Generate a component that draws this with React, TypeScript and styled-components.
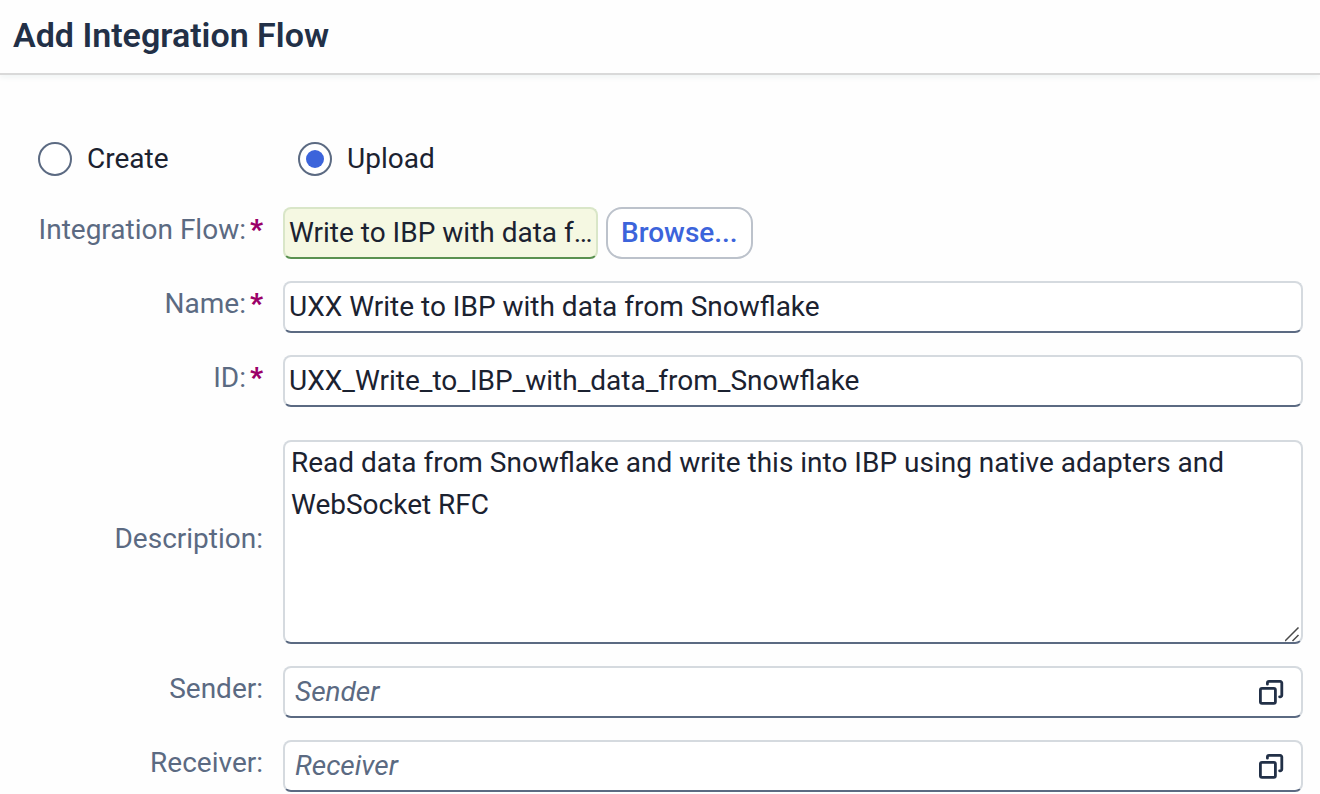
import React from "react";
import styled, { createGlobalStyle, css } from "styled-components";

const color = {
  title: "#223047",
  text: "#1b2230",
  label: "#5b6a82",
  line: "#d5dadf",
  lineStrong: "#5b6a82",
  required: "#9b0068",
  accent: "#3c64db",
  icon: "#223047",
};

const GlobalStyle = createGlobalStyle`
  *, *::before, *::after { box-sizing: border-box; }
  body {
    margin: 0;
    background: #fefefe;
    color: ${color.text};
    font-family: Roboto, sans-serif;
    font-size: 28px;
  }
  input, textarea, button { font: inherit; color: inherit; margin: 0; }
`;

const Dialog = styled.main`
  display: flex;
  flex-direction: column;
`;

const Header = styled.header`
  padding: 15px 13px 18px;
  border-bottom: 2px solid #d9d9d9;
  box-shadow: 0 2px 6px #eef2f2;
`;

const Title = styled.h1`
  margin: 0;
  color: ${color.title};
  font-size: 34px;
  line-height: 40px;
  font-weight: 600;
`;

const Form = styled.form`
  display: flex;
  flex-direction: column;
  gap: 22px;
  padding: 66px 17px 2px 0;
`;

const ModeGroup = styled.div`
  display: grid;
  grid-template-columns: 260px 260px;
  padding: 0 0 8px 38px;
`;

const RadioLabel = styled.label`
  display: flex;
  align-items: center;
  gap: 15px;
  line-height: 36px;
`;

const Radio = styled.input`
  appearance: none;
  display: grid;
  place-items: center;
  width: 34px;
  height: 34px;
  border: 2px solid ${color.lineStrong};
  border-radius: 50%;
  background: #fff;

  &:checked::before {
    content: "";
    width: 18px;
    height: 18px;
    border-radius: 50%;
    background: ${color.accent};
  }
`;

const Row = styled.div<{ $spaced?: boolean }>`
  display: grid;
  grid-template-columns: 263px minmax(0, 1fr);
  column-gap: 20px;
  align-items: center;
  margin-top: ${(p) => (p.$spaced ? "11px" : "0")};
`;

const FieldLabel = styled.label`
  padding-bottom: 6px;
  color: ${color.label};
  line-height: 36px;
  text-align: right;
  white-space: nowrap;
`;

const Required = styled.span`
  margin-left: 4px;
  color: ${color.required};
  font-weight: 900;
`;

const fieldBox = css`
  display: block;
  width: 100%;
  border: 2px solid ${color.line};
  border-bottom-color: ${color.lineStrong};
  border-radius: 8px;
  background: #fff;
  outline: none;
`;

const TextInput = styled.input`
  ${fieldBox}
  height: 52px;
  padding: 0 4px 2px;
`;

const FileName = styled(TextInput)`
  width: 315px;
  padding-right: 0;
  border-color: #d9e6c8;
  border-bottom-color: #5a9150;
  background: #f5f8e2;
  text-overflow: ellipsis;
`;

const FileRow = styled.div`
  display: flex;
  gap: 8px;
`;

const BrowseButton = styled.button`
  height: 52px;
  padding: 0 13px 2px;
  border: 2px solid #bcc2cb;
  border-radius: 16px;
  background: #fff;
  color: ${color.accent};
  font-weight: 500;
`;

const AreaFrame = styled.div`
  position: relative;
`;

const TextArea = styled.textarea`
  ${fieldBox}
  height: 204px;
  padding: 0 6px;
  line-height: 42px;
  resize: none;
`;

const Grip = styled.svg`
  position: absolute;
  right: 3px;
  bottom: 2px;
  pointer-events: none;
`;

const LookupBox = styled.div`
  ${fieldBox}
  display: flex;
  align-items: center;
  height: 52px;
  padding: 0 17px 0 10px;
`;

const LookupInput = styled.input`
  flex: 1;
  min-width: 0;
  padding: 0 0 2px;
  border: 0;
  background: none;
  outline: none;

  &::placeholder {
    color: ${color.label};
    font-style: italic;
    opacity: 1;
  }
`;

const LookupButton = styled.button`
  display: flex;
  padding: 0;
  border: 0;
  background: none;
  color: ${color.icon};
`;

function ValueHelpIcon() {
  return (
    <svg width="26" height="26" viewBox="0 0 26 26" fill="none" stroke="currentColor" strokeWidth="2.8" strokeLinecap="round" aria-hidden="true">
      <rect x="2.4" y="9.4" width="15" height="15" rx="1.6" />
      <path d="M9.4 5.2V4a1.6 1.6 0 0 1 1.6-1.6H22.2A1.6 1.6 0 0 1 23.8 4v12.2a1.6 1.6 0 0 1-1.6 1.6h-.6" />
    </svg>
  );
}

type FieldProps = { id: string; label: string; required?: boolean; spaced?: boolean; children: React.ReactNode };

function Field({ id, label, required, spaced, children }: FieldProps) {
  return (
    <Row $spaced={spaced}>
      <FieldLabel htmlFor={id}>
        {label}:{required && <Required>*</Required>}
      </FieldLabel>
      {children}
    </Row>
  );
}

function Lookup({ id, label }: { id: string; label: string }) {
  return (
    <Field id={id} label={label}>
      <LookupBox>
        <LookupInput id={id} placeholder={label} />
        <LookupButton type="button" aria-label={`Select ${label}`}>
          <ValueHelpIcon />
        </LookupButton>
      </LookupBox>
    </Field>
  );
}

export default function App() {
  return (
    <>
      <GlobalStyle />
      <Dialog>
        <Header>
          <Title>Add Integration Flow</Title>
        </Header>
        <Form>
          <ModeGroup role="radiogroup">
            <RadioLabel>
              <Radio type="radio" name="mode" value="create" />
              Create
            </RadioLabel>
            <RadioLabel>
              <Radio type="radio" name="mode" value="upload" defaultChecked />
              Upload
            </RadioLabel>
          </ModeGroup>
          <Field id="flow" label="Integration Flow" required>
            <FileRow>
              <FileName id="flow" readOnly value="Write to IBP with data f…" />
              <BrowseButton type="button">Browse...</BrowseButton>
            </FileRow>
          </Field>
          <Field id="name" label="Name" required>
            <TextInput id="name" defaultValue="UXX Write to IBP with data from Snowflake" />
          </Field>
          <Field id="flow-id" label="ID" required>
            <TextInput id="flow-id" defaultValue="UXX_Write_to_IBP_with_data_from_Snowflake" />
          </Field>
          <Field id="description" label="Description" spaced>
            <AreaFrame>
              <TextArea
                id="description"
                spellCheck={false}
                defaultValue="Read data from Snowflake and write this into IBP using native adapters and WebSocket RFC"
              />
              <Grip width="15" height="15" viewBox="0 0 15 15" stroke="#4a4a4a" strokeWidth="1.5" aria-hidden="true">
                <path d="M0 14L13.5 0.5M7.500 14L13.5 8" />
              </Grip>
            </AreaFrame>
          </Field>
          <Lookup id="sender" label="Sender" />
          <Lookup id="receiver" label="Receiver" />
        </Form>
      </Dialog>
    </>
  );
}
